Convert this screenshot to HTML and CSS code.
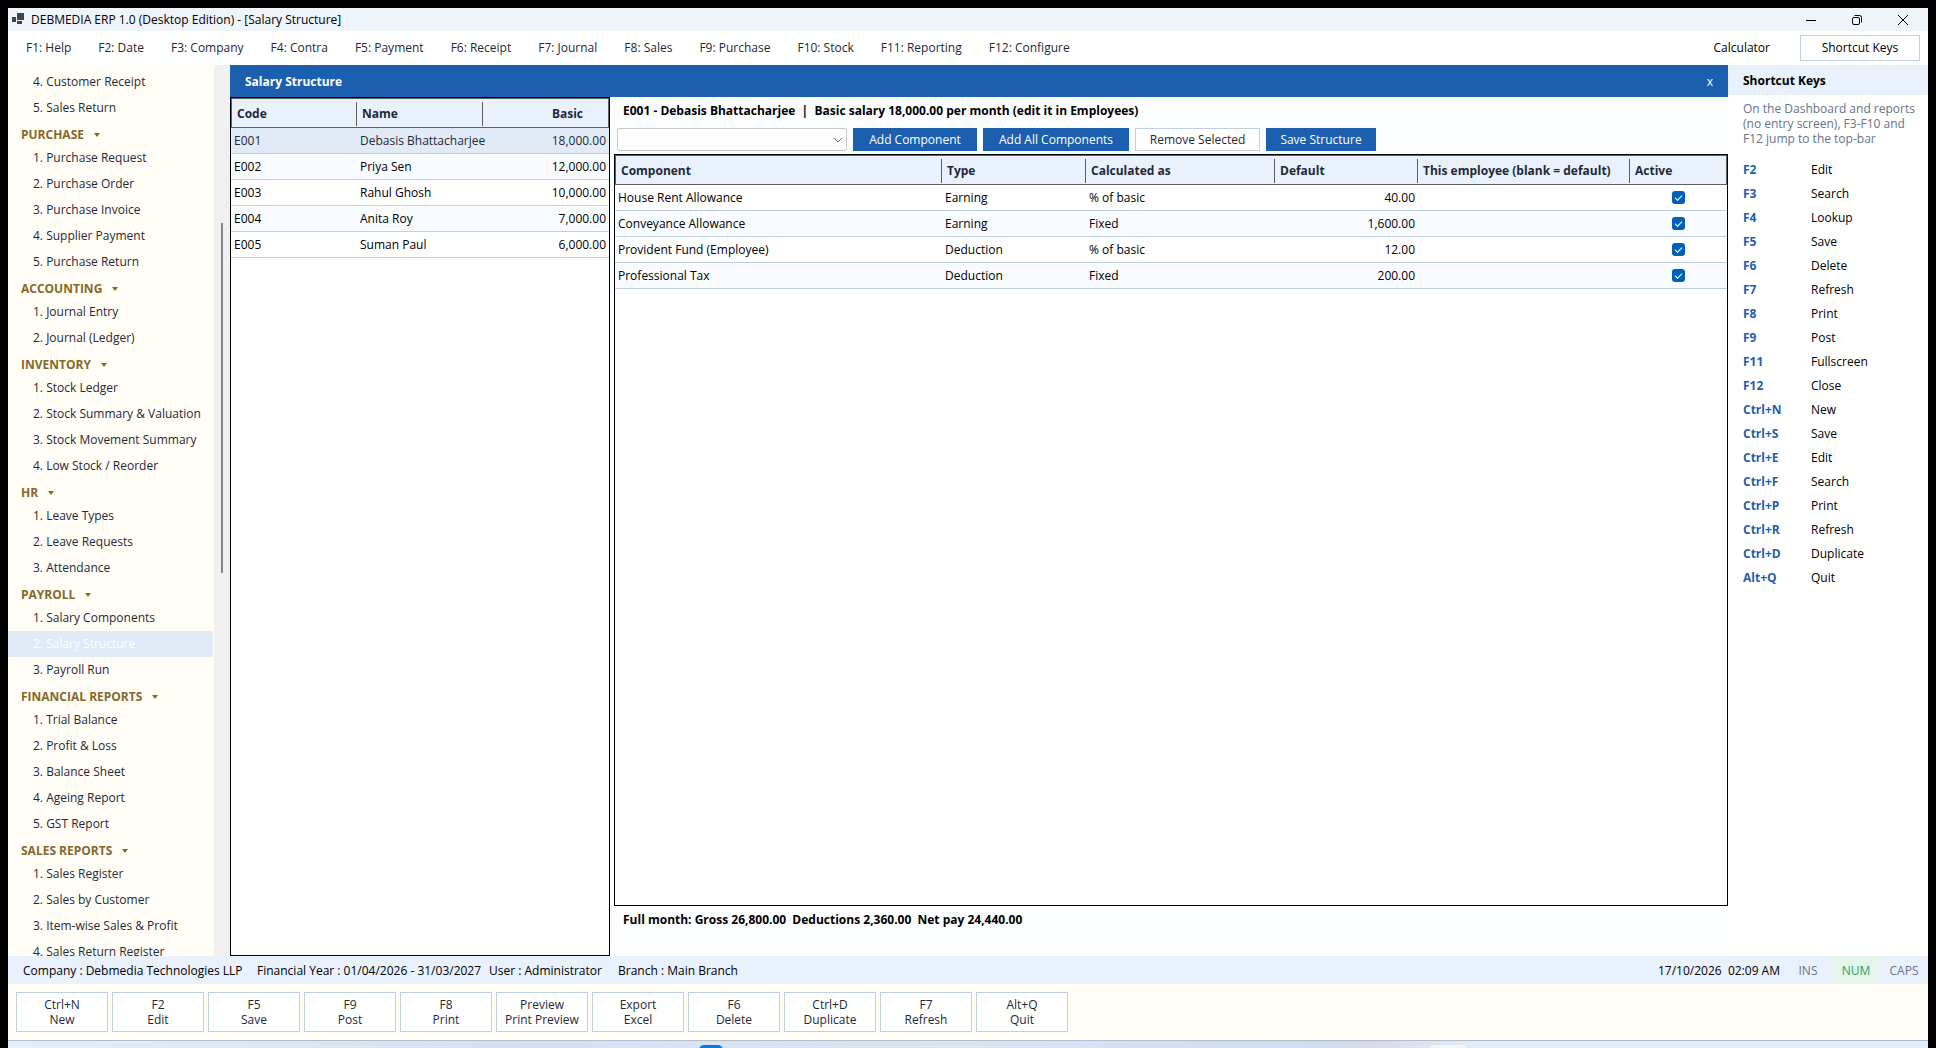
FILE: index.html
```html
<!DOCTYPE html>
<html lang="en">
<head>
<meta charset="utf-8">
<title>DEBMEDIA ERP 1.0 (Desktop Edition) - [Salary Structure]</title>
<link rel="stylesheet" href="styles.css">
</head>
<body>
<div class="window">
  <header class="titlebar">
    <svg class="app-icon" width="12" height="13" viewBox="0 0 12 13" fill="#444"><path d="M0 4h4v5H0zM5 0h7v7H5zM5 8h5v3H5z"/></svg>
    <span class="title">DEBMEDIA ERP 1.0 (Desktop Edition) - [Salary Structure]</span>
    <div class="win-controls">
      <button type="button" aria-label="Minimize"><svg width="12" height="12" viewBox="0 0 12 12" fill="none" stroke="#000"><path d="M1 6.5h10"/></svg></button>
      <button type="button" aria-label="Restore"><svg width="12" height="12" viewBox="0 0 12 12" fill="none" stroke="#000"><rect x="1.5" y="3.5" width="7" height="7" rx="1.5"/><path d="M3.5 1.5h5a2 2 0 0 1 2 2v5"/></svg></button>
      <button type="button" aria-label="Close"><svg width="12" height="12" viewBox="0 0 12 12" fill="none" stroke="#000"><path d="M1 1l10 10M11 1L1 11"/></svg></button>
    </div>
  </header>

  <nav class="menubar">
    <button type="button">F1: Help</button>
    <button type="button">F2: Date</button>
    <button type="button">F3: Company</button>
    <button type="button">F4: Contra</button>
    <button type="button">F5: Payment</button>
    <button type="button">F6: Receipt</button>
    <button type="button">F7: Journal</button>
    <button type="button">F8: Sales</button>
    <button type="button">F9: Purchase</button>
    <button type="button">F10: Stock</button>
    <button type="button">F11: Reporting</button>
    <button type="button">F12: Configure</button>
    <button type="button" class="calculator">Calculator</button>
    <button type="button" class="boxed">Shortcut Keys</button>
  </nav>

  <div class="workspace">
    <aside class="sidebar">
      <nav class="tree">
        <a href="#">4. Customer Receipt</a>
        <a href="#">5. Sales Return</a>
        <h2>PURCHASE <i class="caret"></i></h2>
        <a href="#">1. Purchase Request</a>
        <a href="#">2. Purchase Order</a>
        <a href="#">3. Purchase Invoice</a>
        <a href="#">4. Supplier Payment</a>
        <a href="#">5. Purchase Return</a>
        <h2>ACCOUNTING <i class="caret"></i></h2>
        <a href="#">1. Journal Entry</a>
        <a href="#">2. Journal (Ledger)</a>
        <h2>INVENTORY <i class="caret"></i></h2>
        <a href="#">1. Stock Ledger</a>
        <a href="#">2. Stock Summary &amp; Valuation</a>
        <a href="#">3. Stock Movement Summary</a>
        <a href="#">4. Low Stock / Reorder</a>
        <h2>HR <i class="caret"></i></h2>
        <a href="#">1. Leave Types</a>
        <a href="#">2. Leave Requests</a>
        <a href="#">3. Attendance</a>
        <h2>PAYROLL <i class="caret"></i></h2>
        <a href="#">1. Salary Components</a>
        <a href="#" class="selected">2. Salary Structure</a>
        <a href="#">3. Payroll Run</a>
        <h2>FINANCIAL REPORTS <i class="caret"></i></h2>
        <a href="#">1. Trial Balance</a>
        <a href="#">2. Profit &amp; Loss</a>
        <a href="#">3. Balance Sheet</a>
        <a href="#">4. Ageing Report</a>
        <a href="#">5. GST Report</a>
        <h2>SALES REPORTS <i class="caret"></i></h2>
        <a href="#">1. Sales Register</a>
        <a href="#">2. Sales by Customer</a>
        <a href="#">3. Item-wise Sales &amp; Profit</a>
        <a href="#">4. Sales Return Register</a>
      </nav>
      <div class="scrollbar"><div class="thumb"></div></div>
    </aside>

    <main class="document">
      <div class="doc-header">
        <h1>Salary Structure</h1>
        <button type="button" aria-label="Close Salary Structure">x</button>
      </div>
      <div class="doc-body">
        <section class="grid employees">
          <table>
            <colgroup><col class="c-code"><col class="c-name"><col></colgroup>
            <thead><tr><th>Code</th><th>Name</th><th class="num">Basic</th></tr></thead>
            <tbody>
              <tr class="current"><td>E001</td><td>Debasis Bhattacharjee</td><td class="num">18,000.00</td></tr>
              <tr><td>E002</td><td>Priya Sen</td><td class="num">12,000.00</td></tr>
              <tr><td>E003</td><td>Rahul Ghosh</td><td class="num">10,000.00</td></tr>
              <tr><td>E004</td><td>Anita Roy</td><td class="num">7,000.00</td></tr>
              <tr><td>E005</td><td>Suman Paul</td><td class="num">6,000.00</td></tr>
            </tbody>
          </table>
        </section>

        <section class="detail">
          <p class="summary top">E001 - Debasis Bhattacharjee &nbsp;|&nbsp; Basic salary 18,000.00 per month (edit it in Employees)</p>
          <div class="actions">
            <div class="combo">
              <select aria-label="Component"><option></option></select>
              <svg width="10" height="6" viewBox="0 0 10 6" fill="none" stroke="#666"><path d="M1 1l4 4 4-4"/></svg>
            </div>
            <button type="button" class="add">Add Component</button>
            <button type="button" class="add-all">Add All Components</button>
            <button type="button" class="remove">Remove Selected</button>
            <button type="button" class="save">Save Structure</button>
          </div>
          <div class="grid components">
            <table>
              <colgroup><col><col class="c-type"><col class="c-calc"><col class="c-default"><col class="c-own"><col class="c-active"></colgroup>
              <thead><tr><th>Component</th><th>Type</th><th>Calculated as</th><th>Default</th><th>This employee (blank = default)</th><th>Active</th></tr></thead>
              <tbody>
                <tr><td>House Rent Allowance</td><td>Earning</td><td>% of basic</td><td class="num">40.00</td><td></td><td class="check"><input type="checkbox" checked aria-label="House Rent Allowance active"></td></tr>
                <tr><td>Conveyance Allowance</td><td>Earning</td><td>Fixed</td><td class="num">1,600.00</td><td></td><td class="check"><input type="checkbox" checked aria-label="Conveyance Allowance active"></td></tr>
                <tr><td>Provident Fund (Employee)</td><td>Deduction</td><td>% of basic</td><td class="num">12.00</td><td></td><td class="check"><input type="checkbox" checked aria-label="Provident Fund active"></td></tr>
                <tr><td>Professional Tax</td><td>Deduction</td><td>Fixed</td><td class="num">200.00</td><td></td><td class="check"><input type="checkbox" checked aria-label="Professional Tax active"></td></tr>
              </tbody>
            </table>
          </div>
          <p class="summary bottom">Full month: Gross 26,800.00 &nbsp;Deductions 2,360.00 &nbsp;Net pay 24,440.00</p>
        </section>
      </div>
    </main>

    <aside class="shortcuts">
      <h2>Shortcut Keys</h2>
      <p>On the Dashboard and reports (no entry screen), F3-F10 and F12 jump to the top-bar</p>
      <dl>
        <dt>F2</dt><dd>Edit</dd>
        <dt>F3</dt><dd>Search</dd>
        <dt>F4</dt><dd>Lookup</dd>
        <dt>F5</dt><dd>Save</dd>
        <dt>F6</dt><dd>Delete</dd>
        <dt>F7</dt><dd>Refresh</dd>
        <dt>F8</dt><dd>Print</dd>
        <dt>F9</dt><dd>Post</dd>
        <dt>F11</dt><dd>Fullscreen</dd>
        <dt>F12</dt><dd>Close</dd>
        <dt>Ctrl+N</dt><dd>New</dd>
        <dt>Ctrl+S</dt><dd>Save</dd>
        <dt>Ctrl+E</dt><dd>Edit</dd>
        <dt>Ctrl+F</dt><dd>Search</dd>
        <dt>Ctrl+P</dt><dd>Print</dd>
        <dt>Ctrl+R</dt><dd>Refresh</dd>
        <dt>Ctrl+D</dt><dd>Duplicate</dd>
        <dt>Alt+Q</dt><dd>Quit</dd>
      </dl>
    </aside>
  </div>

  <div class="statusbar">
    <span>Company : Debmedia Technologies LLP</span>
    <span>Financial Year : 01/04/2026 - 31/03/2027</span>
    <span>User : Administrator</span>
    <span>Branch : Main Branch</span>
    <span class="clock">17/10/2026 &nbsp;02:09 AM</span>
    <div class="locks"><span>INS</span><span class="on">NUM</span><span>CAPS</span></div>
  </div>

  <footer class="toolbar">
    <button type="button">Ctrl+N<br>New</button>
    <button type="button">F2<br>Edit</button>
    <button type="button">F5<br>Save</button>
    <button type="button">F9<br>Post</button>
    <button type="button">F8<br>Print</button>
    <button type="button">Preview<br>Print Preview</button>
    <button type="button">Export<br>Excel</button>
    <button type="button">F6<br>Delete</button>
    <button type="button">Ctrl+D<br>Duplicate</button>
    <button type="button">F7<br>Refresh</button>
    <button type="button">Alt+Q<br>Quit</button>
  </footer>
  <div class="taskbar"><i class="task-start"></i><i class="task-app"></i></div>
</div>
</body>
</html>
```

FILE: styles.css
```css
* { box-sizing: border-box; }

body {
  margin: 0;
  background: #000;
  color: #000;
  font: 12px/16px "Open Sans", "Noto Sans", sans-serif;
}

h1, h2, p, dl, dd { margin: 0; font-size: 12px; }

button {
  font: inherit;
  color: #1f2937;
  background: none;
  border: 0;
  padding: 0;
  white-space: nowrap;
}

.window {
  display: flex;
  flex-direction: column;
  height: 100vh;
  padding: 8px 8px 0;
}

/* Title bar */
.titlebar {
  display: flex;
  flex: none;
  align-items: center;
  height: 23px;
  padding: 0 2px 0 4px;
  background: #eff3fa;
}
.title { margin-left: 7px; }
.win-controls { display: flex; margin-left: auto; }
.win-controls button { display: grid; place-items: center; width: 46px; height: 22px; }

/* Menu */
.menubar {
  display: flex;
  flex: none;
  align-items: center;
  gap: 27px;
  height: 34px;
  padding: 0 8px 0 18px;
  background: #fff;
}
.menubar .calculator { margin: 0 3px 0 auto; color: #000; }
.menubar .boxed {
  width: 120px;
  height: 26px;
  border: 1px solid #c0d0e4;
  color: #000;
}

.workspace { display: flex; flex: 1; min-height: 0; background: #fff; }

/* Navigation tree */
.sidebar { display: flex; flex: none; width: 222px; background: #fffdf6; }
.tree { flex: 1; padding-top: 4px; overflow: hidden; }
.tree a {
  display: block;
  height: 26px;
  padding-left: 25px;
  line-height: 26px;
  color: #1f2937;
  text-decoration: none;
}
.tree a.selected { margin-right: 1px; background: #e1ebf8; color: #fff; }
.tree h2 {
  display: flex;
  align-items: center;
  gap: 10px;
  height: 24px;
  padding: 4px 0 0 13px;
  color: #83692a;
}
.caret { border: 3px solid transparent; border-top: 4px solid #83692a; border-bottom: 0; }
.scrollbar { flex: none; width: 16px; padding: 158px 7px 0; background: #f0f0f0; }
.thumb { height: 350px; background: #858585; }

/* Document */
.document { display: flex; flex: 1; flex-direction: column; min-width: 0; }
.doc-header {
  display: flex;
  flex: none;
  align-items: center;
  justify-content: space-between;
  height: 32px;
  padding: 2px 15px 0 15px;
  background: #1c5fae;
  color: #fff;
}
.doc-header button { color: #fff; }
.doc-body { display: flex; flex: 1; gap: 4px; min-height: 0; background: #fcfdff; }

.grid { border: 1px solid #000; background: #fff; }
.grid table { width: 100%; border-collapse: separate; border-spacing: 0; table-layout: fixed; }
.grid th {
  position: relative;
  height: 30px;
  padding: 2px 5px 0;
  border: solid #606060;
  border-width: 1px 0;
  background: #e9f2fc;
  color: #1f2937;
  text-align: left;
  white-space: nowrap;
}
.grid th:first-child { border-left-width: 1px; }
.grid th:last-child { border-right-width: 1px; }
.grid th:not(:last-child)::after {
  content: "";
  position: absolute;
  top: 3px;
  right: 0;
  bottom: 1px;
  width: 1px;
  background: #606060;
}
.grid td { height: 26px; padding: 0 3px; border-bottom: 1px solid #bfd0e2; white-space: nowrap; }
.grid .num { text-align: right; }
.grid th.num { padding-right: 25px; }
.grid tbody tr:nth-child(even) { background: #f8fbff; }
.grid tbody tr.current { background: #e1ebf8; color: #1f2937; }

.employees { flex: none; width: 380px; }
.c-code { width: 126px; }
.c-name { width: 126px; }

.detail { display: flex; flex: 1; flex-direction: column; min-width: 0; }
.summary { flex: none; padding-left: 9px; font-weight: 700; }
.summary.top { height: 31px; padding-top: 6px; }
.summary.bottom { height: 50px; padding-top: 6px; }
.actions { display: flex; flex: none; gap: 6px; height: 26px; padding: 0 0 3px 3px; }
.combo { position: relative; width: 230px; }
.combo select {
  width: 100%;
  height: 23px;
  border: 1px solid #c8c8c8;
  border-radius: 2px;
  background: #fdfdfd;
  appearance: none;
}
.combo svg { position: absolute; top: 9px; right: 4px; pointer-events: none; }
.actions button { height: 23px; background: #1c5fae; color: #fff; }
.actions .add { width: 124px; }
.actions .add-all { width: 146px; }
.actions .remove { width: 125px; padding-top: 1px; border: 1px solid #c0d0e4; background: #fff; color: #1f2937; }
.actions .save { width: 110px; }

.components { flex: 1; min-height: 0; }
.c-type { width: 144px; }
.c-calc { width: 189px; }
.c-default { width: 143px; }
.c-own { width: 212px; }
.c-active { width: 97px; }

.check input {
  display: block;
  width: 13px;
  height: 13px;
  margin: 0 auto;
  border-radius: 3px;
  background: #005fb8;
  appearance: none;
}
.check input::before {
  content: "";
  display: block;
  width: 6px;
  height: 3px;
  margin: 0 auto;
  border: solid #fff;
  border-width: 0 0 1px 1px;
  transform: translateY(4px) rotate(-45deg);
}

/* Shortcut panel */
.shortcuts { flex: none; width: 200px; background: #fff; }
.shortcuts h2 { height: 30px; padding: 1px 0 0 15px; background: #e9f1fc; line-height: 30px; }
.shortcuts p { padding: 6px 6px 0 15px; color: #64748b; line-height: 15px; }
.shortcuts dl { display: grid; grid-template-columns: 68px 1fr; padding: 12px 15px 0; line-height: 24px; }
.shortcuts dt { color: #1c5fae; font-weight: 700; }

/* Status bar */
.statusbar {
  display: grid;
  grid-template-columns: 234px 232px 129px 1fr auto auto;
  flex: none;
  height: 28px;
  padding-left: 15px;
  background: #e9f1fc;
  line-height: 30px;
  white-space: nowrap;
}
.locks { display: flex; margin-left: 4px; color: #64748b; }
.locks span { width: 48px; text-align: center; }
.locks .on { background: #e4f5ec; color: #2f9e63; }

/* Command buttons */
.toolbar {
  display: flex;
  flex: none;
  gap: 4px;
  height: 57px;
  padding: 8px;
  border-bottom: 1px solid #b4bcc4;
  background: #fffdf6;
}
.toolbar button { width: 92px; height: 40px; border: 1px solid #c0d0e4; background: #fff; line-height: 15px; }

.taskbar {
  position: relative;
  flex: none;
  height: 7px;
  overflow: hidden;
  background: linear-gradient(90deg, #e4effa, #d5e1f5 25%, #dbe3f6 50%, #cfdff3 68%, #d9daec 71%, #e0ecf7 76%, #e0ecf7);
}
.task-start, .task-app { position: absolute; top: 4px; height: 12px; border-radius: 5px; }
.task-start { left: 36%; width: 24px; background: #0a78d4; }
.task-app { left: 74%; width: 38px; background: #f2f5fb; }
```
